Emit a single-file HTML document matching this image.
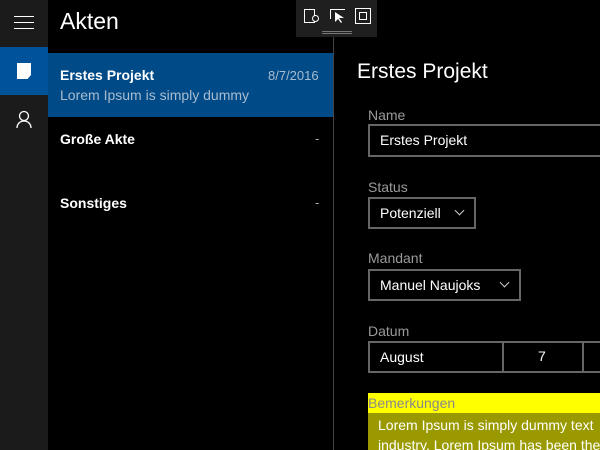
<!DOCTYPE html>
<html><head><style>
*{margin:0;padding:0;box-sizing:border-box}
body{width:600px;height:450px;overflow:hidden;background:#000;font-family:"Liberation Sans",sans-serif;color:#fff;position:relative}
.a{position:absolute}
.lbl{position:absolute;left:368px;font-size:14px;color:#9a9a9a}
.box{position:absolute;border:2px solid #666;font-size:14px;padding-left:10px;line-height:28px}
.chev{position:absolute;width:7px;height:7px;border-right:1px solid #ccc;border-bottom:1px solid #ccc;transform:rotate(45deg)}
</style></head><body>
<div class="a" style="left:0;top:0;width:48px;height:450px;background:#1b1b1b"></div>
<div class="a" style="left:14px;top:16px;width:20px;height:1px;background:#fff"></div>
<div class="a" style="left:14px;top:22px;width:20px;height:1px;background:#fff"></div>
<div class="a" style="left:14px;top:28px;width:20px;height:1px;background:#fff"></div>
<div class="a" style="left:0;top:47px;width:48px;height:48px;background:#005398"></div>
<div class="a" style="left:17px;top:63px;width:14px;height:16px;background:#fff;clip-path:polygon(0 0,100% 0,100% 75%,75% 100%,0 100%)"></div>
<svg class="a" style="left:14px;top:109px" width="20" height="20" viewBox="0 0 20 20"><circle cx="10" cy="7" r="4.5" fill="none" stroke="#fff" stroke-width="1.3"/><path d="M3 19c0-4 3-7 7-7s7 3 7 7" fill="none" stroke="#fff" stroke-width="1.3"/></svg>
<div class="a" style="left:60px;top:8px;font-size:23px">Akten</div>
<div class="a" style="left:48px;top:53px;width:285px;height:64px;background:#004a87"></div>
<div class="a" style="left:60px;top:67px;font-size:14px;font-weight:bold">Erstes Projekt</div>
<div class="a" style="left:268px;top:68px;font-size:13px;color:#a8bccf">8/7/2016</div>
<div class="a" style="left:60px;top:87px;font-size:14px;color:#a8bccf">Lorem Ipsum is simply dummy</div>
<div class="a" style="left:60px;top:131px;font-size:14px;font-weight:bold">Große Akte</div>
<div class="a" style="left:315px;top:131px;font-size:13px;color:#aaa">-</div>
<div class="a" style="left:60px;top:195px;font-size:14px;font-weight:bold">Sonstiges</div>
<div class="a" style="left:315px;top:195px;font-size:13px;color:#aaa">-</div>
<div class="a" style="left:333px;top:37px;width:1px;height:413px;background:#444"></div>
<div class="a" style="left:296px;top:0;width:81px;height:37px;background:#1f1f1f"></div>
<div class="a" style="left:322px;top:31px;width:30px;height:1px;background:#777"></div>
<div class="a" style="left:322px;top:33px;width:30px;height:1px;background:#777"></div>
<div class="a" style="left:304px;top:9px;width:11px;height:14px;border:1px solid #fff"></div>
<div class="a" style="left:312px;top:15px;width:7px;height:7px;border:1px solid #fff;border-radius:50%;background:#1f1f1f"></div>
<div class="a" style="left:330px;top:9px;width:15px;height:10px;border:1px solid #fff;border-right:none;border-bottom-width:0;border-left-width:1px"></div>
<svg class="a" style="left:334px;top:11px" width="12" height="13"><path d="M1 1L1 11L4 8L7 12L8 11L5 7L10 7Z" fill="#fff"/></svg>
<div class="a" style="left:355px;top:8px;width:16px;height:16px;border:1px solid #fff"></div>
<div class="a" style="left:359px;top:12px;width:8px;height:8px;border:1px solid #fff"></div>
<div class="a" style="left:357px;top:60px;font-size:21px">Erstes Projekt</div>
<div class="lbl" style="top:107px">Name</div>
<div class="box" style="left:368px;top:124px;width:240px;height:33px">Erstes Projekt</div>
<div class="lbl" style="top:179px">Status</div>
<div class="box" style="left:368px;top:197px;width:108px;height:32px">Potenziell</div>
<div class="chev" style="left:456px;top:207px"></div>
<div class="lbl" style="top:250px">Mandant</div>
<div class="box" style="left:368px;top:269px;width:153px;height:32px">Manuel Naujoks</div>
<div class="chev" style="left:501px;top:279px"></div>
<div class="lbl" style="top:323px">Datum</div>
<div class="box" style="left:368px;top:341px;width:240px;height:32px">August</div>
<div class="a" style="left:502px;top:341px;width:2px;height:32px;background:#666"></div>
<div class="a" style="left:582px;top:341px;width:2px;height:32px;background:#666"></div>
<div class="a" style="left:538px;top:348px;font-size:14px">7</div>
<div class="a" style="left:368px;top:393px;width:232px;height:20px;background:#ffff00"></div>
<div class="a" style="left:368px;top:395px;font-size:14px;color:#888">Bemerkungen</div>
<div class="a" style="left:368px;top:413px;width:232px;height:37px;background:#9a9a00;overflow:hidden;white-space:nowrap;font-size:14px;padding-left:10px;line-height:20px;padding-top:2px">Lorem Ipsum is simply dummy text<br>industry. Lorem Ipsum has been the</div>
</body></html>
